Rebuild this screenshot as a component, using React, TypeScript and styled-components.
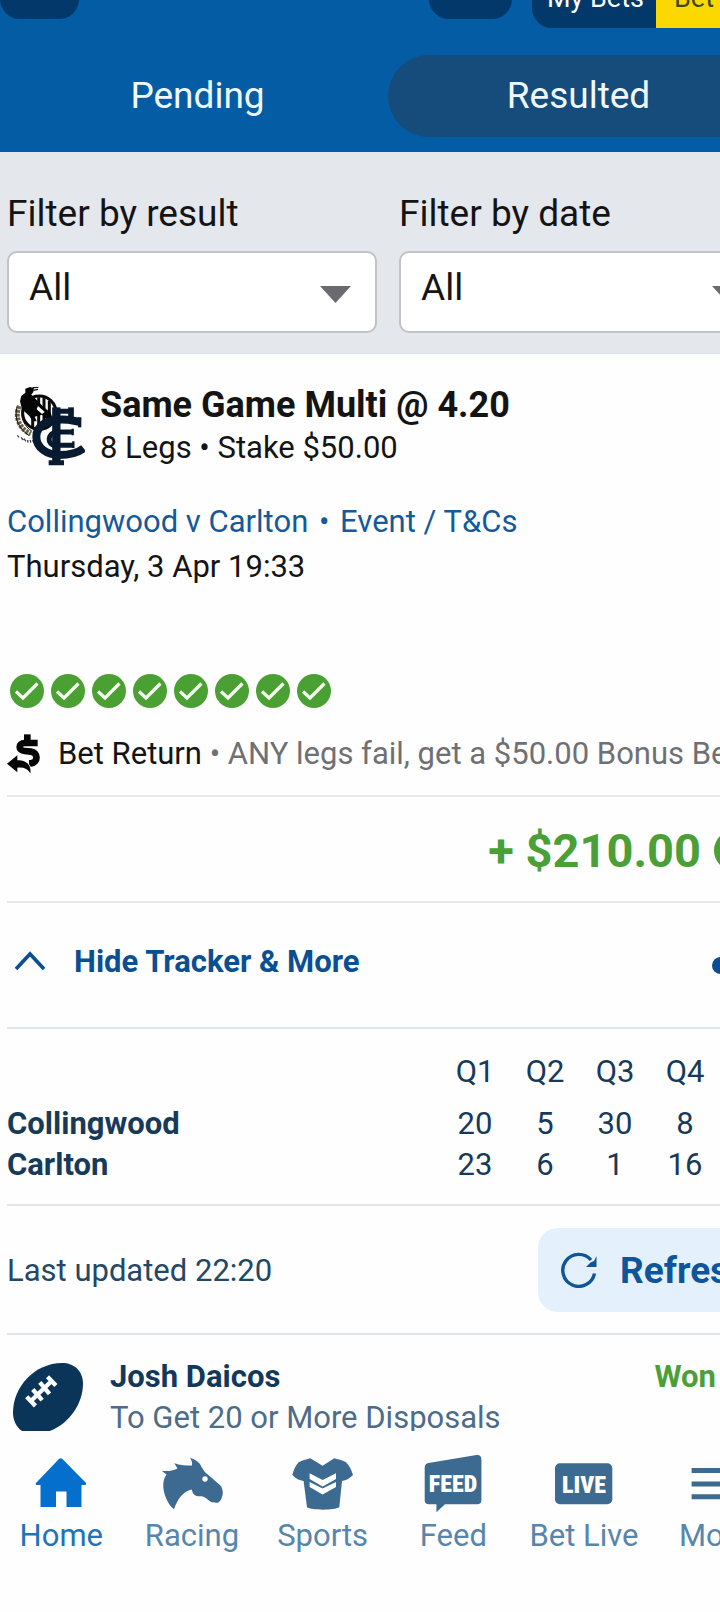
import React from "react";
import styled, { createGlobalStyle } from "styled-components";

const GlobalStyle = createGlobalStyle`
  *, *::before, *::after { box-sizing: border-box; }
  body {
    margin: 0;
    overflow: hidden;
    background: #fefefe;
    color: #141414;
    font-family: Roboto, "Liberation Sans", sans-serif;
    font-size: 31px;
  }
  button, select { font: inherit; color: inherit; border: 0; background: none; padding: 0; margin: 0; }
  h2, h3, p, ul { margin: 0; padding: 0; font-size: inherit; font-weight: inherit; }
  a { color: inherit; text-decoration: none; }
  svg { display: block; flex: none; }
`;

/* The content runs wider than the viewport and is cut at its right edge. */
const Screen = styled.div`
  display: flex;
  flex-direction: column;
  width: calc(100% + 56px);
  height: 100vh;
`;

const Header = styled.header`
  flex: none;
  overflow: hidden;
  padding-bottom: 15px;
  background: #045ca5;
  color: #ffffff;
`;

const TopBar = styled.div`
  display: flex;
  align-items: flex-end;
  gap: 20px;
  height: 68px;
  margin-top: -40px;
`;

const TopPill = styled.button<{ $push?: boolean }>`
  width: ${(p) => (p.$push ? 83 : 79)}px;
  height: 56px;
  margin-bottom: 9px;
  margin-left: ${(p) => (p.$push ? "auto" : "0")};
  border-radius: 20px;
  background: #03386a;
`;

const BetButtons = styled.div`
  display: flex;
  width: 244px;
  height: 68px;
  border-radius: 20px 0 0 20px;
  overflow: hidden;
  font-size: 27px;
  line-height: 32px;
`;

const TopButton = styled.button<{ $accent?: boolean }>`
  display: flex;
  align-items: flex-end;
  width: ${(p) => (p.$accent ? 120 : 124)}px;
  padding: 0 0 14px ${(p) => (p.$accent ? 18 : 15)}px;
  background: ${(p) => (p.$accent ? "#fbd800" : "#03386a")};
  color: ${(p) => (p.$accent ? "#3b4a1e" : "#ffffff")};
  white-space: nowrap;
`;

const Tabs = styled.div`
  display: grid;
  grid-template-columns: 1fr 1fr;
  margin: 27px 7px 0;
`;

const Tab = styled.button<{ $active?: boolean }>`
  height: 82px;
  padding-bottom: 2px;
  border-radius: 41px;
  background: ${(p) => (p.$active ? "#154c7b" : "transparent")};
  color: #f0f8ff;
  font-size: 37px;
`;

const Main = styled.main`
  flex: 1;
  min-height: 0;
  overflow: hidden;
`;

const Filters = styled.form`
  display: grid;
  grid-template-columns: 1fr 1fr;
  gap: 22px;
  padding: 40px 7px 20px;
  background: #e4e7ec;
  border-bottom: 1px solid #dcdfe3;
  font-size: 37px;
`;

const Field = styled.div`
  display: flex;
  flex-direction: column;
  gap: 15px;
  line-height: 44px;
`;

const SelectBox = styled.div`
  display: grid;
  align-items: center;
  border: 2px solid #c2c3c7;
  border-radius: 10px;
  background: #ffffff;

  & > * { grid-area: 1 / 1; }
  & > svg { justify-self: end; margin-right: 24px; margin-top: 4px; pointer-events: none; }
`;

const Select = styled.select`
  appearance: none;
  width: 100%;
  height: 78px;
  padding: 0 0 8px 20px;
`;

const Card = styled.article`
  padding: 0 7px;
`;

const BetHead = styled.div`
  display: flex;
  gap: 15px;
  padding: 29px 0 0 7px;

  & > svg { margin-top: 4px; }
`;

const HeadText = styled.div`
  line-height: 41px;
`;

const BetTitle = styled.h2`
  font-size: 36px;
  font-weight: 700;
  line-height: 44px;
`;

const EventInfo = styled.div`
  margin-top: 31px;
  line-height: 45px;
`;

const EventLink = styled.a`
  color: #14599a;
`;

const Dot = styled.span`
  margin: 0 3px;
`;

const Ticks = styled.ul`
  display: flex;
  gap: 7px;
  margin: 85px 0 0 3px;
  list-style: none;
`;

const Promo = styled.p`
  display: flex;
  align-items: center;
  gap: 18px;
  margin-top: 26px;
  padding-bottom: 21px;
  border-bottom: 2px solid #e6e8ea;
  line-height: 40px;
  white-space: nowrap;
`;

const Muted = styled.span`
  color: #6e7074;
`;

const Payout = styled.div`
  display: flex;
  align-items: center;
  justify-content: flex-end;
  gap: 13px;
  height: 106px;
  padding: 2px 14px 0 0;
  border-bottom: 2px solid #e6e8ea;
  color: #4b9f37;
  font-size: 47px;
  font-weight: 700;
`;

const TrackerBar = styled.div`
  display: flex;
  align-items: center;
  justify-content: space-between;
  height: 126px;
  border-bottom: 2px solid #dfe5ec;
  color: #0b4f92;
`;

const TrackerToggle = styled.button`
  display: flex;
  align-items: center;
  gap: 28px;
  padding: 0 0 8px 7px;
  font-weight: 700;
`;

const ScoreBox = styled.div`
  padding: 22px 49px 19px 0;
  border-bottom: 2px solid #e2e6ea;
  color: #173a5a;
`;

const ScoreTable = styled.table`
  width: 100%;
  border-collapse: collapse;
  line-height: 41px;

  th, td { padding: 0; text-align: center; }
  thead th { width: 70px; height: 52px; vertical-align: top; font-weight: 400; }
  thead td { width: auto; }
  tbody th { text-align: left; font-weight: 700; }
`;

const UpdateRow = styled.div`
  display: flex;
  align-items: center;
  justify-content: space-between;
  padding: 22px 0 21px;
  border-bottom: 2px solid #dfe5ec;
  color: #254766;
`;

const RefreshButton = styled.button`
  display: flex;
  align-items: center;
  gap: 22px;
  width: 231px;
  height: 84px;
  padding-left: 23px;
  border-radius: 20px;
  background: #e4f1fc;
  color: #0f5599;
  font-size: 37px;
  font-weight: 700;
`;

const Leg = styled.section`
  display: flex;
  align-items: flex-start;
  padding: 21px 0 20px 6px;
  line-height: 41px;

  & > svg { margin: 7px 27px 0 0; }
`;

const LegText = styled.div`
  flex: 1;
  color: #4c6c8a;
`;

const LegName = styled.h3`
  color: #12385c;
  font-weight: 700;
`;

const Outcome = styled.span`
  margin-right: 53px;
  color: #4b9f37;
  font-weight: 700;
`;

const Nav = styled.nav`
  display: grid;
  flex: none;
  grid-template-columns: repeat(6, 1fr);
  margin: 0 -4px;
  padding: 23px 0 54px;
  background: #fefefe;
`;

const NavItem = styled.a<{ $active?: boolean }>`
  display: flex;
  flex-direction: column;
  align-items: center;
  color: ${(p) => (p.$active ? "#1f73b7" : "#5785ac")};
  line-height: 44px;

  svg { color: ${(p) => (p.$active ? "#046fcd" : "#3d6a91")}; }
`;

const DropArrow = () => (
  <svg width="31" height="17" viewBox="0 0 31 17" aria-hidden="true">
    <path d="M0 0H31L15.500 17Z" fill="#696b70" />
  </svg>
);

const ClubLogos = () => (
  <svg width="71" height="80" viewBox="12 15 213 240" aria-label="Collingwood and Carlton">
    <circle cx="88" cy="92" r="50" fill="#fff" stroke="#0a0a0a" strokeWidth="9" />
    <path d="M86 46V140M102 46V140M118 56V130M68 90V138" stroke="#0a0a0a" strokeWidth="9" />
    <path d="M28 72C14 100 24 138 62 156" fill="none" stroke="#6b604a" strokeWidth="15" strokeDasharray="9 3" />
    <path d="M21 76C12 108 26 140 56 160M36 84C32 108 42 132 66 148" fill="none" stroke="#1b1810" strokeWidth="3" />
    <path d="M46 20L60 15L72 19L70 30L64 38L78 52L100 74L122 92L132 122L116 118L96 98L74 104L80 118H68L58 102L36 82L30 58L34 42L46 32Z" fill="#050505" />
    <path d="M68 17L85 16M70 25L84 22" stroke="#111" strokeWidth="4" />
    <path d="M84 72L104 90L96 96L80 82Z" fill="#fff" />
    <path d="M22 160L27 166M33 166L40 174M42 170L48 178M53 174L54 182M61 174L62 182M68 174L71 181" stroke="#444" strokeWidth="4" />
    <g fill="none" stroke="#071a30">
      <path d="M212 120L172 113C112 108 79 132 79 164C79 198 112 219 148 219C180 219 206 211 221 199" strokeWidth="24" />
      <path d="M139 76V246" strokeWidth="25" />
      <path d="M132 88H190M116 242H162" strokeWidth="15" />
      <path d="M183 76V118" strokeWidth="17" />
      <path d="M209 106V136" strokeWidth="10" />
      <path d="M190 150H142C112 150 108 190 138 190H191" strokeWidth="15" />
      <path d="M188 140V160M190 178V198" strokeWidth="7" />
    </g>
  </svg>
);

const Tick = () => (
  <svg width="34" height="34" viewBox="0 0 34 34" aria-label="Won leg">
    <circle cx="17" cy="17" r="17" fill="#4ba033" />
    <path d="M6 17.500L13 24L27.500 9.500" fill="none" stroke="#f6fff2" strokeWidth="3.200" />
  </svg>
);

const PayoutTick = () => (
  <svg width="41" height="41" viewBox="0 0 34 34" aria-label="Paid">
    <circle cx="17" cy="17" r="17" fill="#4ba033" />
    <path d="M8 17.500L14.500 24L27 10.500" fill="none" stroke="#fff" strokeWidth="3" />
  </svg>
);

const ReturnIcon = () => (
  <svg width="33" height="40" viewBox="20 254 99 120" aria-hidden="true">
    <path d="M112 281H73C53 281 53 304 73 305L92 307C114 309 114 340 92 342H86" fill="none" stroke="#050505" strokeWidth="20" />
    <path d="M71 255H91V275H71Z" fill="#050505" />
    <path d="M20 343L51 318V333C76 331 94 346 90 372C83 359 70 353 51 355V369Z" fill="#050505" stroke="#fff" strokeWidth="4" paintOrder="stroke" />
  </svg>
);

const ChevronUp = () => (
  <svg width="32" height="20" viewBox="0 0 32 20" aria-hidden="true">
    <path d="M2 18L16 3L30 18" fill="none" stroke="currentColor" strokeWidth="3.600" />
  </svg>
);

const MoreDots = () => (
  <svg width="57" height="17" viewBox="0 0 57 17" aria-label="More options">
    <g fill="#0b4f92">
      <circle cx="8.500" cy="8.500" r="8.500" />
      <circle cx="28.500" cy="8.500" r="8.500" />
      <circle cx="48.500" cy="8.500" r="8.500" />
    </g>
  </svg>
);

const RefreshIcon = () => (
  <svg width="37" height="36" viewBox="0 0 37 36" aria-hidden="true">
    <path d="M33.500 21.500A16 16 0 1 1 30 8" fill="none" stroke="currentColor" strokeWidth="3.400" />
    <path d="M35.500 4V15H25L29.500 10.500L33 9Z" fill="currentColor" />
  </svg>
);

const Football = () => (
  <svg width="70" height="71" viewBox="38 128 209 212" aria-hidden="true">
    <path d="M185 128C220 128 247 152 247 190C247 262 185 340 98 340C60 340 38 312 38 276C38 200 102 128 185 128Z" fill="#0b3459" />
    <path d="M90 243L157 178M79 229L105 256M97 207L125 239M118 186L147 220M141 169L166 195" fill="none" stroke="#fff" strokeWidth="13" />
  </svg>
);

const IconBox = ({ children }: { children: React.ReactNode }) => (
  <svg width="64" height="60" viewBox="0 0 64 60" fill="currentColor" aria-hidden="true">
    {children}
  </svg>
);

const iconText = {
  fill: "#fff",
  fontFamily: '"Roboto Condensed", "Open Sans Condensed", "Liberation Sans Narrow", Roboto, sans-serif',
  fontWeight: 900,
  textAnchor: "middle" as const,
};

const HomeIcon = () => (
  <IconBox>
    <path d="M29.700 5.200Q31.700 3.400 33.700 5.200L57 29Q57.800 31 56 31H52.500V53H37.500V37.500H27V53H11.500V31H8Q6 31 7 29Z" />
  </IconBox>
);

const RacingIcon = () => (
  <IconBox>
    <path d="M30 3.700C35 5.500 40 8 41.500 13L45 18.300L53.300 25.300L60.500 31.500C62.500 34 63.500 39 62.300 42C61.300 46 59 49.500 56 48.700C54.500 48.400 52.500 48.500 50.700 47.700C48 46 45 42.500 41.700 42.200C38 42.500 35 42 33 39.500L31.700 35.500C23 37.500 17.500 45 14 55.300C8 50.500 3.800 41 3.300 32.700C3 28 4 24 6.500 20.500L1.700 16.700C7 17.500 12 17 17.500 14.500L14.300 9.300C20 11.500 26 11.500 32 11.500C32.500 9 31.500 6 30 3.700Z" />
    <circle cx="45" cy="25" r="2.700" fill="#fff" />
  </IconBox>
);

const SportsIcon = () => (
  <IconBox>
    <path d="M19.300 4.300L31.600 11.700L43.300 4.300C48 5.500 52 6.500 55 8.300C58.500 12 60.500 16 62 21C58.500 24.500 55 26.500 51 27L48.300 53.300C43 56.500 21 56.500 16 53.300L12.600 27C8.500 26.500 4.500 24.500 1.300 21C2.500 16 4.500 12 7.600 8.300C11 6.500 15 5.500 19.300 4.300Z" />
    <path d="M18.600 19.300L31.600 26L45 19.300V25L31.600 32.500L18.600 25ZM18.600 28L31.600 34.500L45 28V33L31.600 40.500L18.600 33Z" fill="#fff" />
  </IconBox>
);

const FeedIcon = () => (
  <IconBox>
    <path d="M7.500 9L55.500 1Q60.400 0.500 60.400 5.500V46Q60.400 50.300 56 50.300H24L15.400 58.300V50.300H8Q3.700 50.300 3.700 46V13.500Q3.700 9.600 7.500 9Z" />
    <text x="32" y="38" fontSize="24" {...iconText}>FEED</text>
  </IconBox>
);

const LiveIcon = () => (
  <IconBox>
    <rect x="3" y="9.300" width="57.300" height="41" rx="5" />
    <text x="32" y="39" fontSize="24" {...iconText}>LIVE</text>
  </IconBox>
);

const MenuIcon = () => (
  <IconBox>
    <path d="M8.600 14H60V19H8.600ZM8.600 27.500H60V32.500H8.600ZM8.600 40.200H60V45.200H8.600Z" />
  </IconBox>
);

const navItems = [
  { label: "Home", icon: <HomeIcon />, active: true },
  { label: "Racing", icon: <RacingIcon /> },
  { label: "Sports", icon: <SportsIcon /> },
  { label: "Feed", icon: <FeedIcon /> },
  { label: "Bet Live", icon: <LiveIcon /> },
  { label: "More", icon: <MenuIcon /> },
];

const quarters = ["Q1", "Q2", "Q3", "Q4"];
const scores = [
  { team: "Collingwood", points: [20, 5, 30, 8] },
  { team: "Carlton", points: [23, 6, 1, 16] },
];

const FilterField = ({ id, label }: { id: string; label: string }) => (
  <Field>
    <label htmlFor={id}>{label}</label>
    <SelectBox>
      <Select id={id} defaultValue="All">
        <option>All</option>
      </Select>
      <DropArrow />
    </SelectBox>
  </Field>
);

export default function App() {
  return (
    <>
      <GlobalStyle />
      <Screen>
        <Header>
          <TopBar>
            <TopPill type="button" aria-label="Back" />
            <TopPill type="button" aria-label="Search" $push />
            <BetButtons>
              <TopButton type="button">My Bets</TopButton>
              <TopButton type="button" $accent>Bet Slip</TopButton>
            </BetButtons>
          </TopBar>
          <Tabs>
            <Tab type="button">Pending</Tab>
            <Tab type="button" $active>Resulted</Tab>
          </Tabs>
        </Header>

        <Main>
          <Filters>
            <FilterField id="result" label="Filter by result" />
            <FilterField id="date" label="Filter by date" />
          </Filters>

          <Card>
            <BetHead>
              <ClubLogos />
              <HeadText>
                <BetTitle>Same Game Multi @ 4.20</BetTitle>
                <p>8 Legs • Stake $50.00</p>
              </HeadText>
            </BetHead>
            <EventInfo>
              <EventLink href="#event">
                Collingwood v Carlton <Dot>•</Dot> Event / T&amp;Cs
              </EventLink>
              <p>Thursday, 3 Apr 19:33</p>
            </EventInfo>
            <Ticks>
              {Array.from({ length: 8 }, (_, i) => (
                <li key={i}><Tick /></li>
              ))}
            </Ticks>
            <Promo>
              <ReturnIcon />
              <span>Bet Return <Muted>• ANY legs fail, get a $50.00 Bonus Bet</Muted></span>
            </Promo>
            <Payout>
              <span>+ $210.00</span>
              <PayoutTick />
            </Payout>
            <TrackerBar>
              <TrackerToggle type="button">
                <ChevronUp />
                Hide Tracker &amp; More
              </TrackerToggle>
              <button type="button"><MoreDots /></button>
            </TrackerBar>
            <ScoreBox>
              <ScoreTable>
                <thead>
                  <tr>
                    <td />
                    {quarters.map((q) => <th key={q} scope="col">{q}</th>)}
                  </tr>
                </thead>
                <tbody>
                  {scores.map((s) => (
                    <tr key={s.team}>
                      <th scope="row">{s.team}</th>
                      {s.points.map((p, i) => <td key={i}>{p}</td>)}
                    </tr>
                  ))}
                </tbody>
              </ScoreTable>
            </ScoreBox>
            <UpdateRow>
              <span>Last updated 22:20</span>
              <RefreshButton type="button">
                <RefreshIcon />
                Refresh
              </RefreshButton>
            </UpdateRow>
            <Leg>
              <Football />
              <LegText>
                <LegName>Josh Daicos</LegName>
                <p>To Get 20 or More Disposals</p>
              </LegText>
              <Outcome>Won</Outcome>
            </Leg>
          </Card>
        </Main>

        <Nav>
          {navItems.map((n) => (
            <NavItem key={n.label} href="#" $active={n.active}>
              {n.icon}
              {n.label}
            </NavItem>
          ))}
        </Nav>
      </Screen>
    </>
  );
}
